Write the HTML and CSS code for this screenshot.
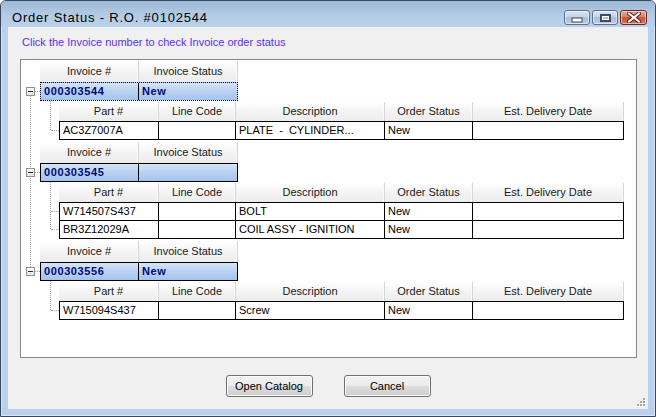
FILE: index.html
```html
<!DOCTYPE html>
<html lang="en">
<head>
    <meta charset="UTF-8">
    <title>Order Status - R.O. #0102544</title>
    <link rel="stylesheet" href="styles.css">
</head>
<body>
    <div class="window">
        <div class="titlebar">
            <span class="title">Order Status - R.O. #0102544</span>
            <div class="caption-buttons">
                <span class="cap-btn">
                    <svg width="12" height="6" viewBox="0 0 12 6"><rect x="1" y="1" width="10" height="4" fill="#fff" stroke="#3b4a5e"/></svg>
                </span>
                <span class="cap-btn">
                    <svg width="11" height="8" viewBox="0 0 11 8"><rect x="1" y="1" width="9" height="6" fill="none" stroke="#3b4a5e" stroke-width="2"/><rect x="2.5" y="2.5" width="6" height="3" fill="none" stroke="#fff"/></svg>
                </span>
                <span class="cap-btn close">
                    <svg width="14" height="11" viewBox="0 0 14 11">
                        <path d="M2 1.5 L12 9.5 M12 1.5 L2 9.5" stroke="#5a2218" stroke-width="4" stroke-linecap="square"/>
                        <path d="M2 1.5 L12 9.5 M12 1.5 L2 9.5" stroke="#fff" stroke-width="2" stroke-linecap="square"/>
                    </svg>
                </span>
            </div>
        </div>

        <div class="client">
            <p class="hint">Click the Invoice number to check Invoice order status</p>

            <div class="panel">
                <div class="tree">
                    <div class="node">
                        <span class="toggle"></span>
                        <div class="inv-head"><div>Invoice #</div><div>Invoice Status</div></div>
                        <div class="inv-row focused"><div>000303544</div><div>New</div></div>
                        <div class="parts">
                            <div class="parts-head">
                                <div>Part #</div><div>Line Code</div><div>Description</div><div>Order Status</div><div>Est. Delivery Date</div>
                            </div>
                            <div class="parts-rows">
                                <div class="prow"><div>AC3Z7007A</div><div></div><div>PLATE  -  CYLINDER...</div><div>New</div><div></div></div>
                            </div>
                        </div>
                    </div>

                    <div class="node">
                        <span class="toggle"></span>
                        <div class="inv-head"><div>Invoice #</div><div>Invoice Status</div></div>
                        <div class="inv-row"><div>000303545</div><div></div></div>
                        <div class="parts">
                            <div class="parts-head">
                                <div>Part #</div><div>Line Code</div><div>Description</div><div>Order Status</div><div>Est. Delivery Date</div>
                            </div>
                            <div class="parts-rows">
                                <div class="prow"><div>W714507S437</div><div></div><div>BOLT</div><div>New</div><div></div></div>
                                <div class="prow"><div>BR3Z12029A</div><div></div><div>COIL ASSY - IGNITION</div><div>New</div><div></div></div>
                            </div>
                        </div>
                    </div>

                    <div class="node">
                        <span class="toggle"></span>
                        <div class="inv-head"><div>Invoice #</div><div>Invoice Status</div></div>
                        <div class="inv-row"><div>000303556</div><div>New</div></div>
                        <div class="parts">
                            <div class="parts-head">
                                <div>Part #</div><div>Line Code</div><div>Description</div><div>Order Status</div><div>Est. Delivery Date</div>
                            </div>
                            <div class="parts-rows">
                                <div class="prow"><div>W715094S437</div><div></div><div>Screw</div><div>New</div><div></div></div>
                            </div>
                        </div>
                    </div>
                </div>
            </div>

            <div class="actions">
                <button class="btn">Open Catalog</button>
                <button class="btn">Cancel</button>
            </div>

            <svg class="grip" width="9" height="9" viewBox="0 0 9 9">
                <g fill="#fff">
                    <rect x="7" y="1" width="2" height="2"/>
                    <rect x="4" y="4" width="2" height="2"/><rect x="7" y="4" width="2" height="2"/>
                    <rect x="1" y="7" width="2" height="2"/><rect x="4" y="7" width="2" height="2"/><rect x="7" y="7" width="2" height="2"/>
                </g>
                <g fill="#a8a8a8">
                    <rect x="6" y="0" width="2" height="2"/>
                    <rect x="3" y="3" width="2" height="2"/><rect x="6" y="3" width="2" height="2"/>
                    <rect x="0" y="6" width="2" height="2"/><rect x="3" y="6" width="2" height="2"/><rect x="6" y="6" width="2" height="2"/>
                </g>
            </svg>
        </div>
    </div>
</body>
</html>
```

FILE: styles.css
```css
* {
    box-sizing: border-box;
}
body {
    margin: 0;
    font-family: "Liberation Sans", Arial, sans-serif;
    font-size: 11px;
    color: #000;
    background: #fff;
}

/* window frame */
.window {
    width: 656px;
    height: 417px;
    border: 1px solid #34495f;
    border-radius: 6px 6px 0 0;
    background: #b9d1ea;
    box-shadow: inset 0 0 0 1px rgba(255, 255, 255, 0.45);
    overflow: hidden;
}
.titlebar {
    height: 26px;
    display: flex;
    justify-content: space-between;
    align-items: flex-start;
    padding: 0 8px 0 11px;
    background: linear-gradient(#9fb9d6, #b4cce6 60%, #b9d1ea);
}
.title {
    margin-top: 9px;
    font-size: 13px;
    line-height: 15px;
    letter-spacing: 0.8px;
    color: #000;
}
.caption-buttons {
    display: flex;
    gap: 2px;
    margin-top: 9px;
}
.cap-btn {
    width: 26px;
    height: 15px;
    display: flex;
    align-items: center;
    justify-content: center;
    border: 1px solid #5f708a;
    border-radius: 3px;
    background: linear-gradient(#dae4f1, #c3d3e7 45%, #a9bfdb 50%, #b9cce4);
    box-shadow: inset 0 0 0 1px rgba(255, 255, 255, 0.5);
}
.cap-btn:first-child svg {
    margin-top: 5px;
}
.cap-btn.close {
    width: 27px;
    border-color: #6b2a20;
    background: linear-gradient(#e9a999, #d98370 45%, #c8553e 50%, #d3705a);
}

/* client area */
.client {
    position: relative;
    height: 382px;
    margin: 0 7px;
    background: #f0f0f0;
    padding-top: 9px;
}
.hint {
    margin: 0 0 10px 14px;
    line-height: 13px;
    color: #5c2ef8;
}
.panel {
    width: 617px;
    height: 299px;
    margin-left: 12px;
    border: 1px solid #828790;
    background: #fff;
}

/* invoice tree */
.tree {
    position: relative;
    padding-top: 1px;
}
.tree::before {
    content: "";
    position: absolute;
    left: 9px;
    top: 31px;
    bottom: 49px;
    border-left: 1px dotted #a0a0a0;
}
.node {
    position: relative;
}
.node + .node {
    margin-top: 2px;
}
.toggle {
    position: absolute;
    z-index: 1;
    left: 5px;
    top: 26px;
    width: 9px;
    height: 9px;
    border: 1px solid #919191;
    background: linear-gradient(#ffffff, #e4e4e4);
}
.toggle::after {
    content: "";
    position: absolute;
    left: 1px;
    top: 3px;
    width: 5px;
    height: 1px;
    background: #1b2a3a;
}
.inv-head,
.parts-head {
    display: grid;
    height: 21px;
    line-height: 21px;
    text-align: center;
    color: #1a1a1a;
}
.inv-head {
    width: 198px;
    margin-left: 19px;
    grid-template-columns: 99px 99px;
}
.inv-head div,
.parts-head div {
    border-right: 1px solid #d5d5d5;
    background: linear-gradient(#ffffff, #f4f4f4 50%, #ececec);
    box-shadow: inset -1px 0 #fbfbfb;
}
.inv-row {
    position: relative;
    display: grid;
    grid-template-columns: 98px 98px;
    width: 198px;
    height: 19px;
    margin-left: 19px;
    border: 1px solid #000;
    background: linear-gradient(#d5e4f8, #b9d2f2 50%, #a3c3ee);
    color: #00087a;
    font-weight: bold;
    line-height: 17px;
    letter-spacing: 0.6px;
}
.inv-row.focused {
    border-style: dotted;
}
.inv-row div {
    padding-left: 3px;
}
.inv-row div:first-child {
    border-right: 1px solid #000;
}
.inv-row::before {
    content: "";
    position: absolute;
    left: -6px;
    top: 8px;
    width: 5px;
    border-top: 1px dotted #a0a0a0;
}

/* parts grid */
.parts {
    position: relative;
    width: 565px;
    margin: 1px 0 0 38px;
}
.parts::before {
    content: "";
    position: absolute;
    left: -9px;
    top: -1px;
    bottom: 10px;
    border-left: 1px dotted #a0a0a0;
}
.parts-head {
    height: 19px;
    line-height: 19px;
    grid-template-columns: 100px 77px 149px 88px 151px;
}
.parts-rows {
    border-top: 1px solid #000;
}
.prow {
    position: relative;
    display: grid;
    grid-template-columns: 99px 77px 149px 88px 151px;
    height: 18px;
    border-right: 1px solid #000;
    border-bottom: 1px solid #000;
    line-height: 17px;
}
.prow div {
    border-left: 1px solid #000;
    padding-left: 3px;
    white-space: pre;
    overflow: hidden;
}
.prow::before {
    content: "";
    position: absolute;
    left: -8px;
    top: 8px;
    width: 8px;
    border-top: 1px dotted #a0a0a0;
}

/* dialog buttons */
.actions {
    display: flex;
    justify-content: center;
    gap: 31px;
    margin-top: 17px;
}
.btn {
    width: 87px;
    height: 22px;
    padding: 0;
    font-family: "Liberation Sans", Arial, sans-serif;
    font-size: 11px;
    color: #000;
    border: 1px solid #707070;
    border-radius: 3px;
    background: linear-gradient(#f2f2f2, #ebebeb 50%, #dddddd 50%, #cfcfcf);
    box-shadow: inset 0 0 0 1px #fafafa;
}
.grip {
    position: absolute;
    right: 2px;
    bottom: 2px;
}
```
